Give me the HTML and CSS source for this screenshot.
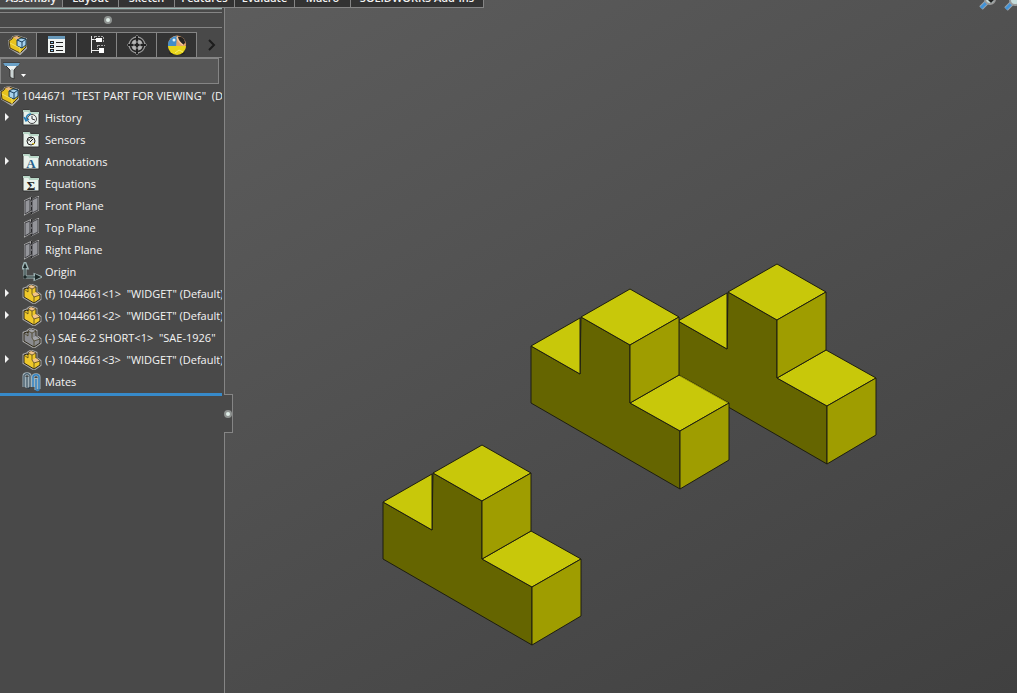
FILE: index.html
```html
<!DOCTYPE html>
<html lang="en">
<head>
<meta charset="utf-8">
<title>Assembly</title>
<link rel="stylesheet" href="styles.css">
</head>
<body>
<svg class="defs" aria-hidden="true">
  <defs>
    <g id="block">
      <path class="halo" d="M2 5 5 4l1-1 3-2 5 2v5l4 3v4l-6 4L2 13Z"/>
      <path d="M2 5 5 4l1 1V3l3-2 5 2v5l4 3v4l-6 4L2 13Z" stroke="#2e291b"/>
      <path class="top" d="M6 3 9 1l5 2-4 2ZM10 10l4-2 4 3-6 2Z"/>
      <path d="M6 3l4 2v5l2 3v6M2 5l4 3V4M10 5l4-2M12 13l6-2" fill="none" stroke="#403819" stroke-width=".7"/>
    </g>
    <g id="assembly">
      <path d="M1 6 4 4l1-2 4-1 9 3v9l-6 6L2 13Z" fill="#e4c32c" stroke="#aaa" stroke-width="2"/>
      <path d="M1 6 4 4l1-2 4-1 9 3v8l-6 6L2 13Z" fill="#e7c31d" stroke="#443719"/>
      <path d="M5 2 9 1l3 2-3 2Z" fill="#e6b584"/>
      <path d="M9 5l4-2 5 1v6l-4 3-5-2Z" fill="#a7d1ec" stroke="#183e5c"/>
      <path d="m9 5 5 2 4-3M14 7v6" fill="none" stroke="#183e5c"/>
      <path d="M2 8l10 5v5" fill="none" stroke="#f1df65"/>
    </g>
    <g id="folder">
      <path d="M1 2h6l1 2h9v13H1Z" fill="#e9f2ec" stroke="#333"/>
      <path d="M1 3h6l1 2h9" fill="none" stroke="#b9d7c7" stroke-width="2"/>
    </g>
    <g id="plane">
      <path d="m3 5 6-3v3l7-4v13l-6 3v-3l-7 4Z" fill="#999a9e" stroke="#aaa" stroke-width="2"/>
      <path d="m3 5 5-2v12l-5 3ZM10 4l6-3v13l-6 3ZM8 5l2-1M8 15l2-1" fill="#94959a" stroke="#404044"/>
      <path d="M9.500 1v17" stroke="#28282a" stroke-dasharray="3 2"/>
    </g>
    <g id="widget" stroke="#1d1d10" stroke-linejoin="round">
      <path d="M0 57 49 85 50 28 99 56 99 114 149 142 149 200 0 114Z" fill="#656500"/>
      <path d="M0 57 49 29 49 85ZM50 28 99 0 148 28 99 56ZM99 114 148 86 198 114 149 142Z" fill="#c8c80a"/>
      <path d="M99 56 148 28 148 86 99 114ZM149 142 198 114 198 171 149 200Z" fill="#9f9d00"/>
    </g>
    <g id="lens">
      <path d="m1 8 6-6" stroke="#9aa4ac" stroke-width="5"/>
      <path d="m1 8 5-5" stroke="#4093d8" stroke-width="3"/>
      <circle cx="10" cy="-1" r="5" fill="#c5dcdb" stroke="#999" stroke-width="2"/>
    </g>
  </defs>
</svg>

<nav class="ribbon" aria-label="Command tabs">
  <button class="ribbon-tab active">Assembly</button>
  <button class="ribbon-tab">Layout</button>
  <button class="ribbon-tab">Sketch</button>
  <button class="ribbon-tab">Features</button>
  <button class="ribbon-tab">Evaluate</button>
  <button class="ribbon-tab">Macro</button>
  <button class="ribbon-tab wide">SOLIDWORKS Add-Ins</button>
</nav>

<div class="workspace">
  <aside class="panel">
    <div class="accent"></div>
    <div class="grip"><span class="dot"></span></div>
    <div class="panel-tabs">
      <button class="panel-tab active" aria-label="Feature tree"><svg width="20" height="20"><use href="#assembly"/></svg></button>
      <button class="panel-tab" aria-label="Properties"><svg width="20" height="20">
        <path d="M1 2h17v16H1Z" fill="#f1f5f3"/><path d="M1 1h17v3H1Z" fill="#6798b9"/>
        <path d="M3 6h4v3H3ZM3 10h4v3H3ZM3 14h4v3H3Z" fill="#222"/><path d="M4 7.500h2M4 11.500h2M4 15.500h2" stroke="#8bc4ec"/><path d="M9 7.500h7M9 11.500h7M9 15.500h7" stroke="#222"/></svg></button>
      <button class="panel-tab" aria-label="Configurations"><svg width="20" height="20">
        <path d="M4.500 1v17M5 4.500h5M5 15.500h7" fill="none" stroke="#eee"/><path d="M9 3h6v4H9ZM12 13h5v5h-5Z" fill="#fff"/><path d="M7.500 1v4M8 1.500h8M16.500 2v6M10.500 10v4M11 10.500h7" stroke="#aaa" stroke-dasharray="2 1"/></svg></button>
      <button class="panel-tab" aria-label="Dimensions"><svg width="20" height="20">
        <path d="M10 0 20 10 10 20 0 10Z" fill="#aaa"/><circle cx="10" cy="10" r="7.500" fill="#999" stroke="#999" stroke-width="2"/><circle cx="10" cy="10" r="6.500" fill="#999" stroke="#222" stroke-width="1.500"/><path d="M10 1v18M1 10h18" stroke="#222" stroke-width="2"/><path d="M7 5v10M13 5v10M5 7h10M5 13h10" stroke="#ccc" stroke-width=".7"/></svg></button>
      <button class="panel-tab" aria-label="Display"><svg width="20" height="20">
        <ellipse cx="10" cy="18" rx="8" ry="2" fill="#242424"/><circle cx="10" cy="9.500" r="9" fill="#e5a36c"/><path d="M10 1A9 9 0 0 0 1 11l8 1Z" fill="#438dc9"/><path d="M1 11h18a9 9 0 0 1-18 0Z" fill="#e8d51b"/><path d="M11 2c4-1 7 2 7 6l-2 2c-3-2-5-4-5-8Z" fill="#252321"/><path d="M10 2c1 4 3 6 6 8" stroke="#f7c79b" fill="none" stroke-width="1.500"/><circle cx="7" cy="5" r="1.500" fill="#d9effa"/><path d="m8 18 4-3 4 2" stroke="#f5ed72" fill="none"/></svg></button>
      <button class="more" aria-label="More tabs"><svg width="10" height="12"><path d="m2 1 5 5-5 5" fill="none" stroke="#1c1c1c" stroke-width="2"/></svg></button>
    </div>
    <button class="filter" aria-label="Filter"><svg width="26" height="20">
      <path d="M0 2h17l-6 7v9l-4-2V9Z" fill="#eef3f2" stroke="#333"/><path d="M0 2h17l-2 3H2Z" fill="#6ba2c8"/><path d="M9 8v9" stroke="#a6b5b4"/><path d="M18 13h5l-2.500 3Z" fill="#fff"/></svg></button>

    <ul class="tree">
      <li class="row root"><svg class="icon" viewBox="0 0 20 20"><use href="#assembly"/></svg><span class="label">1044671 &nbsp;"TEST PART FOR VIEWING"&nbsp; (Default)</span></li>
      <li class="row"><button class="toggle" aria-label="Expand History"></button><svg class="icon" viewBox="0 0 20 20"><use href="#folder"/><circle cx="10" cy="11" r="4.500" fill="#edf2f2" stroke="#444"/><path d="M10 8v3l3 1" fill="none" stroke="#333"/><path d="M2 9l2 4 3-2M4 12c0-4 2-6 5-6" fill="none" stroke="#277eb7" stroke-width="1.500"/></svg><span class="label">History</span></li>
      <li class="row"><svg class="icon" viewBox="0 0 20 20"><use href="#folder"/><circle cx="9" cy="11" r="4" fill="#e8ece7" stroke="#222"/><path d="m8 12 3-3M6 10h2M9 7v2" stroke="#111"/><path d="M10 13h3l-2 2Z" fill="#d8b81f"/></svg><span class="label">Sensors</span></li>
      <li class="row"><button class="toggle" aria-label="Expand Annotations"></button><svg class="icon" viewBox="0 0 20 20"><use href="#folder"/><text class="glyph blue" x="9" y="16">A</text></svg><span class="label">Annotations</span></li>
      <li class="row"><svg class="icon" viewBox="0 0 20 20"><use href="#folder"/><text class="glyph" x="9" y="16">Σ</text></svg><span class="label">Equations</span></li>
      <li class="row"><svg class="icon" viewBox="0 0 20 20"><use href="#plane"/></svg><span class="label">Front Plane</span></li>
      <li class="row"><svg class="icon" viewBox="0 0 20 20"><use href="#plane"/></svg><span class="label">Top Plane</span></li>
      <li class="row"><svg class="icon" viewBox="0 0 20 20"><use href="#plane"/></svg><span class="label">Right Plane</span></li>
      <li class="row"><svg class="icon" viewBox="0 0 20 20"><path d="M3 1v14h14M3 1 1 6h4ZM18 15l-5-2v4Z" fill="none" stroke="#9db4b5" stroke-width="3"/><path d="M3 4v11h12" fill="none" stroke="#1d2a2a"/><path d="M3 1 5 6H1ZM13 12l6 3-6 3ZM3 13l2 2-2 2-2-2Z" fill="#1d2828"/></svg><span class="label">Origin</span></li>
      <li class="row"><button class="toggle" aria-label="Expand widget 1"></button><svg class="icon gold" viewBox="0 0 20 20"><use href="#block"/></svg><span class="label">(f) 1044661&lt;1&gt; &nbsp;"WIDGET" (Default)</span></li>
      <li class="row"><button class="toggle" aria-label="Expand widget 2"></button><svg class="icon gold" viewBox="0 0 20 20"><use href="#block"/></svg><span class="label">(-) 1044661&lt;2&gt; &nbsp;"WIDGET" (Default)</span></li>
      <li class="row"><svg class="icon grey" viewBox="0 0 20 20"><use href="#block"/></svg><span class="label">(-) SAE 6-2 SHORT&lt;1&gt; &nbsp;"SAE-1926"</span></li>
      <li class="row"><button class="toggle" aria-label="Expand widget 3"></button><svg class="icon gold" viewBox="0 0 20 20"><use href="#block"/></svg><span class="label">(-) 1044661&lt;3&gt; &nbsp;"WIDGET" (Default)</span></li>
      <li class="row"><svg class="icon" viewBox="0 0 20 20"><path d="M2 15V4c0-3 6-3 6 0v11M5 5v11M11 5v10M11 5c0-3 6-3 6 0v12M14 6v12" fill="none" stroke="#a4b3ba" stroke-width="3"/><path d="M2 15V4c0-3 6-3 6 0v11c0 2-3 2-3 0V5" fill="none" stroke="#263e50"/><path d="M11 15V5c0-3 6-3 6 0v12c0 2-3 2-3 0V7" fill="none" stroke="#3384c4" stroke-width="1.500"/></svg><span class="label">Mates</span></li>
    </ul>
    <div class="rollback"></div>
    <button class="handle" aria-label="Collapse panel"><span class="dot"></span></button>
  </aside>

  <main class="viewport">
    <svg class="scene" width="500" height="390" role="img" aria-label="Three widget parts">
      <use href="#widget" x="295" y="5"/>
      <use href="#widget" x="148" y="30"/>
      <path d="m297 117 48 27" stroke="#969500"/>
      <use href="#widget" x="0" y="186"/>
    </svg>
  </main>
</div>
<svg class="view-tools" width="40" height="12" aria-hidden="true"><use href="#lens" x="3" y="0"/><path d="M11 0h6l-3 3Z" fill="#222"/><use href="#lens" x="28" y="1"/></svg>
</body>
</html>
```
FILE: styles.css
```css
* { box-sizing: border-box; }

body {
  position: relative;
  margin: 0;
  height: 100vh;
  overflow: hidden;
  display: flex;
  flex-direction: column;
  background: linear-gradient(150deg, #606060, #505050 50%, #404040);
  color: #f4f4f4;
  font: 11px/22px "Open Sans", "Noto Sans", sans-serif;
}

button {
  border: 0;
  padding: 0;
  margin: 0;
  background: none;
  color: inherit;
  font: inherit;
}

svg { display: block; flex: none; }
.defs { position: absolute; width: 0; height: 0; }

.ribbon { display: flex; height: 8px; flex: none; }

.ribbon-tab {
  display: flex;
  align-items: flex-end;
  justify-content: center;
  height: 8px;
  width: 56px;
  padding-bottom: 1px;
  overflow: hidden;
  background: #333;
  border-right: 1px solid #858585;
  border-bottom: 1px solid #858585;
  font-weight: 600;
  line-height: 16px;
  white-space: nowrap;
}
.ribbon-tab:nth-child(4), .ribbon-tab:nth-child(5) { width: 60px; }
.ribbon-tab.active { width: 63px; background: #4a4a4a; }
.ribbon-tab.wide { width: 133px; }

.workspace { display: flex; flex: 1; min-height: 0; }

.panel {
  position: relative;
  display: flex;
  flex-direction: column;
  width: 225px;
  flex: none;
  padding-right: 2px;
  background: #494949;
  border-right: 1px solid #858585;
}

.accent { height: 2px; background: #9bb9b5; border-bottom: 1px solid #666; }

.grip {
  display: flex;
  align-items: center;
  justify-content: center;
  height: 16px;
  margin-top: 2px;
  padding-right: 6px;
  border-top: 1px solid #858585;
  border-bottom: 1px solid #858585;
}

.dot {
  width: 8px;
  height: 8px;
  border: 2px solid #8f9391;
  border-radius: 50%;
  background: #dfeee8;
}

.panel-tabs {
  display: flex;
  height: 26px;
  margin-top: 4px;
  border-bottom: 1px solid #858585;
}

.panel-tab {
  display: flex;
  align-items: center;
  justify-content: center;
  width: 40px;
  flex: none;
  background: #333;
  border-top: 1px solid #858585;
  border-right: 1px solid #858585;
}
.panel-tab.active { width: 37px; background: #494949; }
.more { display: flex; align-items: center; justify-content: center; flex: 1; padding-left: 4px; }

.filter {
  display: flex;
  align-items: center;
  height: 26px;
  margin-right: 3px;
  padding-left: 2px;
  background: #575757;
  border: 1px solid #858585;
}

.tree { list-style: none; margin: 0; padding: 0; }

.row {
  display: flex;
  align-items: center;
  height: 22px;
  padding-left: 22px;
  position: relative;
}
.row.root { height: 23px; padding-left: 0; }

.icon { width: 20px; height: 20px; margin-right: 3px; }
.root .icon { margin-right: 2px; }

.label { flex: 1; overflow: hidden; white-space: nowrap; }

.toggle {
  position: absolute;
  left: 5px;
  top: 6px;
  border-left: 4px solid #f4f4f4;
  border-top: 4px solid transparent;
  border-bottom: 4px solid transparent;
}

.gold { fill: #efc82a; color: #f0c38b; }
.grey { fill: #8b8c90; color: #a3a4a8; }
.halo { stroke: #a3a3a3; stroke-width: 3; }
.top { fill: currentColor; }

.glyph {
  fill: #222;
  font: bold 13px "Liberation Serif", serif;
  text-anchor: middle;
}
.glyph.blue { fill: #265e8b; }

.rollback { height: 3px; background: #378aca; }

.handle {
  position: absolute;
  left: 224px;
  top: 386px;
  display: flex;
  align-items: center;
  width: 9px;
  height: 39px;
  background: #494949;
  border: 1px solid #858585;
  border-left: 0;
}

.viewport { position: relative; flex: 1; min-width: 0; overflow: hidden; }
.view-tools { position: absolute; top: 0; right: 0; }
.scene { position: absolute; left: 158px; top: 251px; overflow: visible; }
```
